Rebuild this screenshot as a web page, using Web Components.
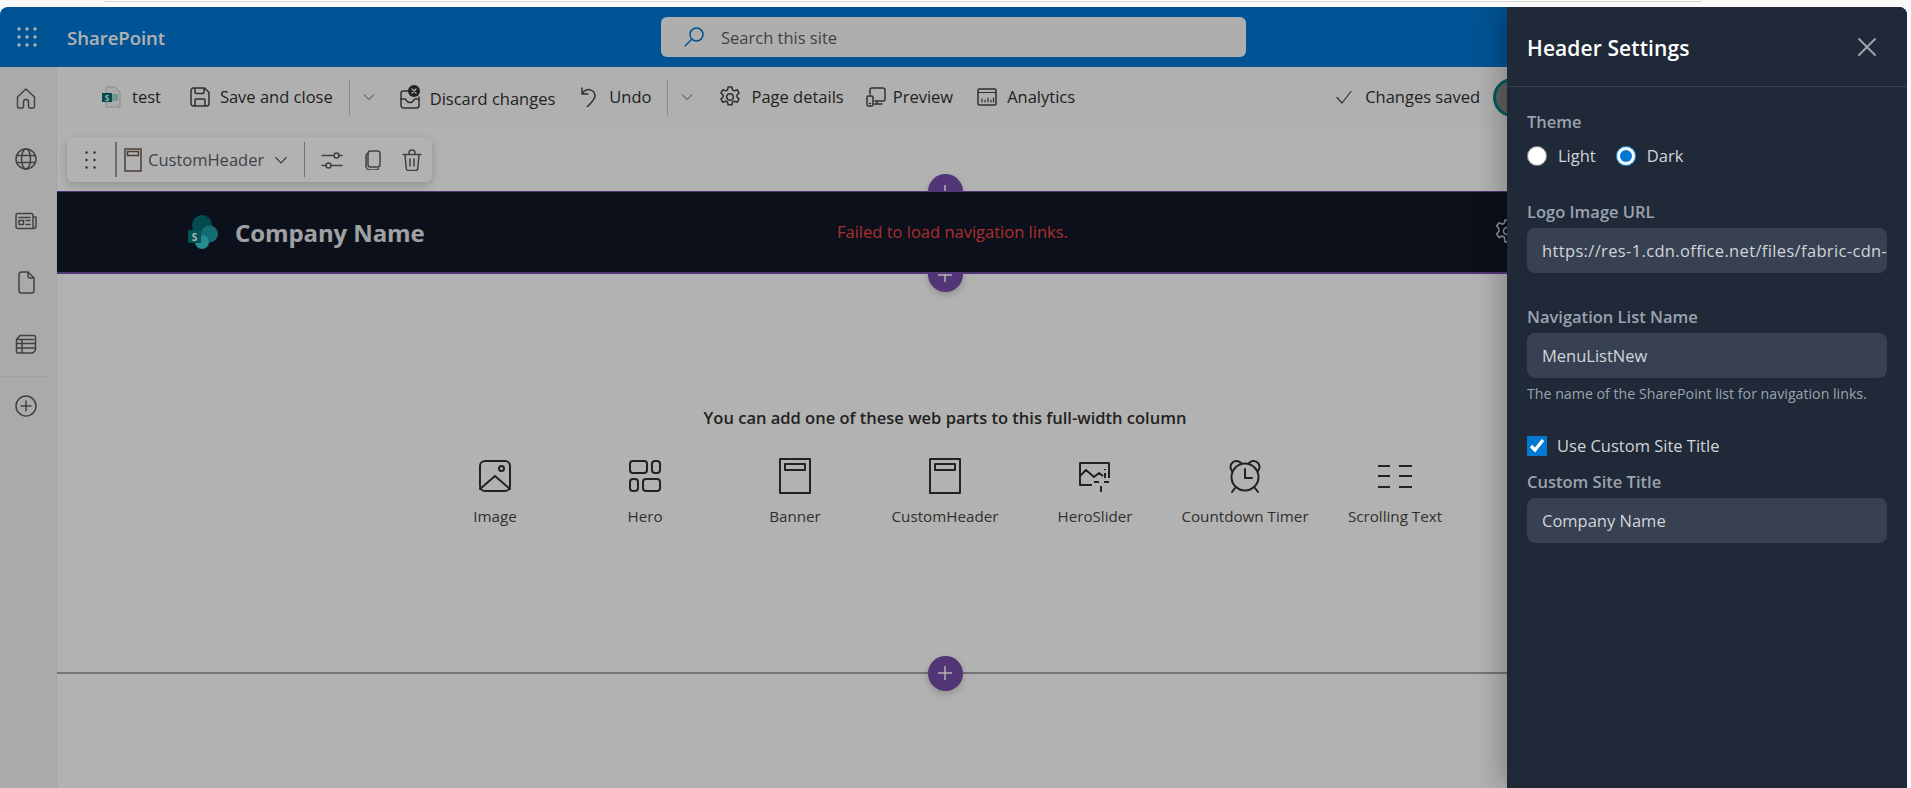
<!DOCTYPE html>
<html lang="en">
<head>
<meta charset="utf-8">
<title>SharePoint - Header Settings</title>
<style>
  html, body { margin: 0; height: 100%; background: #f9f9f9; overflow: hidden; }
  body { font-family: "Open Sans", "Noto Sans", sans-serif; }
</style>
</head>
<body>
<sp-app></sp-app>

<script>
// small helper, every component uses the same open shadow root setup
function shadow(el, html) {
    el.attachShadow({ mode: 'open' });
    el.shadowRoot.innerHTML = html;
}

const svg = (size, body, extra = '') =>
    `<svg width="${size}" height="${size}" viewBox="0 0 ${size} ${size}" fill="none" stroke="currentColor" stroke-width="1.5" stroke-linecap="round" stroke-linejoin="round" ${extra}>${body}</svg>`;

// same as svg() but goes into a component's icon slot
const slotted = (size, body) => svg(size, body, 'slot="icon"');

const chevron = (w, c) =>
    `<svg width="${w}" height="${w}" viewBox="0 0 12 12" fill="none" stroke="${c}" stroke-width="1" stroke-linecap="round" stroke-linejoin="round"><path d="M1.5 4l4.5 4.5L10.5 4"/></svg>`;

class SpSuiteBar extends HTMLElement {
    constructor() {
        super();
        const dots = [];
        for (let r = 0; r < 3; r++) for (let c = 0; c < 3; c++) {
            dots.push(`<circle cx="${2 + c * 8}" cy="${2 + r * 8}" r="1.7"/>`);
        }
        shadow(this, `
            <style>
                :host { display: flex; align-items: center; height: 60px; background: #0078d4; color: #fff; flex: none; }
                .waffle { margin-left: 17px; width: 20px; height: 20px; fill: #fff; flex: none; }
                .brand { margin-left: 30px; width: 100px; font-size: 18.5px; font-weight: 600; flex: none; }
                .search { margin-left: 494px; width: 585px; height: 40px; margin-top: -1px; flex: none; background: #fafafa; border-radius: 6px;
                          display: flex; align-items: center; color: #605e5c; font-size: 16.5px; box-sizing: border-box; padding-left: 22px; }
                .search svg { color: #0078d4; margin-right: 16px; }
                .search span { margin-top: 2px; }
            </style>
            <svg class="waffle" viewBox="0 0 20 20">${dots.join('')}</svg>
            <div class="brand">SharePoint</div>
            <div class="search">
                ${svg(22, '<circle cx="13.5" cy="8.5" r="6.5"/><path d="M8.5 13.5L2 20"/>')}
                <span>Search this site</span>
            </div>
        `);
    }
}

class SpRail extends HTMLElement {
    constructor() {
        super();
        shadow(this, `
            <style>
                :host { display: block; width: 57px; flex: none; background: #f4f4f4; color: #605e5c; box-sizing: border-box; border-right: 1px solid #eee; }
                .i { height: 61.5px; display: flex; align-items: center; justify-content: center; padding-right: 5px; }
                hr { border: 0; height: 1px; background: #e6e6e6; margin: 1px 6px -1px 2px; }
            </style>
            <div class="i">${svg(24, '<path d="M3.5 20.5V11L12 3l8.5 8v9.5A1.5 1.5 0 0 1 19 22h-3a1.5 1.5 0 0 1-1.500-1.500V16a2.500 2.500 0 0 0-5 0v4.500A1.500 1.500 0 0 1 8 22H5a1.500 1.500 0 0 1-1.500-1.500z"/>')}</div>
            <div class="i">${svg(24, '<circle cx="12" cy="12" r="10"/><ellipse cx="12" cy="12" rx="4.500" ry="10"/><path d="M3 8.500h18M3 15.500h18"/>')}</div>
            <div class="i">${svg(24, '<path d="M19 18.500V6.500a2 2 0 0 0-2-2H4a2 2 0 0 0-2 2v11a2 2 0 0 0 2 2h16a2.500 2.500 0 0 0 2-2.500V8h-3"/><rect x="5" y="11.500" width="4.500" height="4"/><path d="M5 8.500h11M12 11.500h4M12 15.500h4"/>')}</div>
            <div class="i">${svg(24, '<path d="M5 4.500A2.500 2.500 0 0 1 7.500 2H14l6 6v12.500a2.500 2.500 0 0 1-2.500 2.500h-10A2.500 2.500 0 0 1 5 20.500zM14 2v4a2 2 0 0 0 2 2h4"/>')}</div>
            <div class="i">${svg(24, '<path d="M2.500 7.500L6 3.500h14A1.500 1.500 0 0 1 21.500 5v13L19 21H4a1.500 1.500 0 0 1-1.500-1.500zM2.500 7.500h17M2.500 11.500h19M2.500 16h19M8 7.500V21"/>')}</div>
            <hr>
            <div class="i">${svg(24, '<circle cx="12" cy="12" r="10"/><path d="M12 7v10M7 12h10"/>')}</div>
        `);
    }
}

// one command in the page bar, icon goes into the slot
class SpCommand extends HTMLElement {
    constructor() {
        super();
        shadow(this, `
            <style>
                :host { display: flex; align-items: center; flex: none; font-size: 16.5px; color: #323130; }
                .ic { display: flex; color: #484644; margin-right: var(--gap, 10px); }
                .tx { margin-top: -2px; }
            </style>
            <span class="ic"><slot name="icon"></slot></span>
            <span class="tx"><slot></slot></span>
        `);
    }
}

class SpSplit extends HTMLElement {
    constructor() {
        super();
        shadow(this, `
            <style>
                :host { display: flex; align-items: center; flex: none; height: 35px; border-left: 1px solid #c8c6c4; padding-left: 13px; }
            </style>
            ${chevron(12, '#605e5c')}
        `);
    }
}

class SpCommandBar extends HTMLElement {
    constructor() {
        super();
        shadow(this, `
            <style>
                :host { display: flex; align-items: center; height: 60px; flex: none; padding: 0 375px 0 45px; background: #fcfcfc; }
                .end { margin-left: auto; }
                .avatar { width: 39px; height: 39px; box-sizing: border-box; border: 3px solid #038387; border-radius: 50%; background: #8a8a8a; margin-left: 13px; flex: none; }
                ::slotted(*) { flex: none; }
            </style>
            <slot></slot>
            <sp-command class="end" style="--gap:13px">${slotted(16, '<path d="M1 8.500l5 5.500L15 2.500" stroke-width="1.200"/>')}Changes saved</sp-command>
            <div class="avatar"></div>
        `);
    }
}

class SpFloatToolbar extends HTMLElement {
    constructor() {
        super();
        const dots = [];
        for (let r = 0; r < 3; r++) for (let c = 0; c < 2; c++) {
            dots.push(`<circle cx="${1.5 + c * 8}" cy="${1.5 + r * 7.5}" r="1.2"/>`);
        }
        shadow(this, `
            <style>
                :host { position: absolute; left: 10px; top: 10px; width: 365px; height: 45px; z-index: 3; background: #fff; border-radius: 6px;
                        box-shadow: 0 3px 10px rgba(0,0,0,.2); display: flex; align-items: center; color: #605e5c; box-sizing: border-box; padding-left: 18px; }
                .dots { fill: #484644; flex: none; }
                .sep { width: 2px; height: 35px; background: #a19f9d; margin-left: 19px; flex: none; }
                .sep.thin { width: 1px; margin-left: 16px; }
                .name { font-size: 16.5px; color: #5a5f6a; margin-left: 6px; width: 116px; flex: none; white-space: nowrap; }
                svg { flex: none; }
                .chev { margin-left: 10px; display: flex; }
                .b { margin-left: 7px; color: #6d5a4f; }
                .t { display: flex; }
            </style>
            <svg class="dots" width="11" height="18" viewBox="0 0 11 18">${dots.join('')}</svg>
            <div class="sep"></div>
            <svg class="b" width="18" height="24" viewBox="0 0 18 24" fill="none" stroke="currentColor" stroke-width="1.5"><rect x="1" y="1" width="16" height="22"/><rect x="3.500" y="3.500" width="11" height="4"/></svg>
            <div class="name">CustomHeader</div>
            <span class="chev">${chevron(14, '#484644')}</span>
            <div class="sep thin"></div>
            <span class="t" style="margin-left:16px">${svg(22, '<path d="M1 6.500h12M18 6.500h3M1 16.500h4M10 16.500h11"/><circle cx="15.500" cy="6.500" r="2.500"/><circle cx="7.500" cy="16.500" r="2.500"/>', 'stroke-width="1.200"')}</span>
            <span class="t" style="margin-left:20px">${svg(20, '<rect x="5" y="1" width="12" height="16" rx="2.500"/><path d="M5 3.500a2.500 2.500 0 0 0-2 2.500v10a4 4 0 0 0 4 4h6a2.500 2.500 0 0 0 2.300-1.500"/>')}</span>
            <span class="t" style="margin-left:18px">${svg(22, '<path d="M2 5.500h18M8 5.500V4a2.500 2.500 0 0 1 6 0v1.500M4 5.500l1.200 13.500a2.500 2.500 0 0 0 2.500 2.500h6.600a2.500 2.500 0 0 0 2.500-2.500L18 5.500M9 10v7M13 10v7"/>')}</span>
        `);
    }
}

class SpAddButton extends HTMLElement {
    constructor() {
        super();
        shadow(this, `
            <style>
                :host { position: absolute; left: 870.500px; width: 35px; height: 35px; border-radius: 50%; background: #744da9;
                        display: flex; align-items: center; justify-content: center; box-shadow: 0 3px 7px rgba(0,0,0,.2); z-index: 1; }
                svg { color: #fff; }
            </style>
            ${svg(16, '<path d="M8 1v14M1 8h14" stroke-linecap="butt"/>')}
        `);
    }
}

class SpDarkHeader extends HTMLElement {
    constructor() {
        super();
        shadow(this, `
            <style>
                :host { display: grid; grid-template-columns: 131px 649px 659px 1fr; align-items: center; height: 83px; box-sizing: border-box;
                        background: #111827; border-top: 1px solid #744da9; border-bottom: 2px solid #744da9; position: relative; z-index: 2; }
                .brand { grid-column: 2; display: flex; align-items: center; color: #e5e7eb; font-size: 24px; font-weight: 700; letter-spacing: -.1px; }
                .brand svg { margin-right: 17px; flex: none; }
                .brand span { margin-top: 1px; }
                .err { color: #ef4444; font-size: 16.5px; margin-top: -1px; }
                .gear { color: #d1d5db; display: flex; margin: -2px 0 0 -2px; }
            </style>
            <div class="brand">
                <svg width="30" height="34" viewBox="0 0 30 34">
                    <circle cx="14" cy="10" r="10" fill="#036c70"/>
                    <circle cx="21.500" cy="19" r="8.500" fill="#1a9ba1"/>
                    <circle cx="14" cy="27" r="7" fill="#37c6d0"/>
                    <rect x="0" y="15" width="13" height="13" rx="1.500" fill="#03787c"/>
                    <text x="6.500" y="25.500" text-anchor="middle" font-size="10" font-weight="700" fill="#fff" font-family="Open Sans, sans-serif">S</text>
                </svg>
                <span>Company Name</span>
            </div>
            <div class="err">Failed to load navigation links.</div>
            <div class="gear">${svg(26, '<circle cx="13" cy="13" r="3.500"/><path d="M11 2h4l.7 3.200 2.200 1 3-1.500 2.500 3.300-2.300 2.500v3l2.300 2.500L21 19.500l-3-1.500-2.200 1L15 24h-4l-.7-5-2.200-1-3 1.500-2.500-3.500 2.300-2.500v-3L2.600 8 5.100 4.700l3 1.500 2.200-1z"/>')}</div>
        `);
    }
}

class SpWebpart extends HTMLElement {
    constructor() {
        super();
        shadow(this, `
            <style>
                :host { display: flex; flex-direction: column; align-items: center; width: 150px; font-size: 15.2px; color: #484644; }
                .ic { height: 36px; display: flex; color: #323130; }
                .lb { margin-top: 12px; line-height: 20px; white-space: nowrap; }
            </style>
            <span class="ic"><slot name="icon"></slot></span>
            <span class="lb"><slot></slot></span>
        `);
    }
}

class SpPicker extends HTMLElement {
    constructor() {
        super();
        shadow(this, `
            <style>
                :host { display: block; padding: 132px 74px 0 0; height: 399px; box-sizing: border-box; position: relative; }
                h3 { margin: 0 0 28px; font-size: 16.5px; font-weight: 600; color: #323130; text-align: center; line-height: 24px; }
                .grid { display: grid; grid-template-columns: repeat(7, 150px); justify-content: center; }
                .line { position: absolute; left: 0; right: 0; top: 398px; height: 2px; background: #a6a6a6; }
                sp-add-button { top: 381.500px; }
                sp-add-button.top { top: -17px; }
            </style>
            <sp-add-button class="top"></sp-add-button>
            <h3>You can add one of these web parts to this full-width column</h3>
            <div class="grid"><slot></slot></div>
            <div class="line"></div>
            <sp-add-button></sp-add-button>
        `);
    }
}

class SpCanvas extends HTMLElement {
    constructor() {
        super();
        shadow(this, `
            <style>
                :host { display: block; position: relative; flex: 1; background: #fff; border-top-left-radius: 10px; }
                .pad { height: 64px; }
            </style>
            <div class="pad"></div>
            <sp-add-button style="top:47px"></sp-add-button>
            <sp-float-toolbar></sp-float-toolbar>
            <sp-dark-header></sp-dark-header>
            <slot></slot>
        `);
    }
}

class SettingsField extends HTMLElement {
    constructor() {
        super();
        shadow(this, `
            <style>
                :host { display: block; }
                label { display: block; font-size: 16.5px; line-height: 24px; font-weight: 600; color: #9ca3af; margin-bottom: 4px; }
                .box { height: 45px; background: #374151; border-radius: 8px; color: #d1d5db; font-size: 16.5px; line-height: 45px; box-sizing: border-box;
                       padding: 0 15px; overflow: hidden; white-space: nowrap; letter-spacing: var(--box-ls, 0); }
                .hint { font-size: 14.2px; color: #9ca3af; line-height: 20px; margin-top: 6px; }
            </style>
            <label>${this.getAttribute('label')}</label>
            <div class="box" role="textbox">${this.getAttribute('value')}</div>
            ${this.hasAttribute('hint') ? `<div class="hint">${this.getAttribute('hint')}</div>` : ''}
        `);
    }
}

class HeaderSettings extends HTMLElement {
    constructor() {
        super();
        shadow(this, `
            <style>
                :host { position: absolute; top: 0; right: 0; bottom: 0; width: 400px; z-index: 6; background: #1f2937; color: #d1d5db;
                        box-shadow: -8px 0 24px rgba(0,0,0,.22); display: block; }
                header { height: 80px; box-sizing: border-box; border-bottom: 1px solid #374151; display: flex; align-items: center;
                         justify-content: space-between; padding: 0 30px 0 20px; }
                h2 { margin: 0 0 -2px; font-size: 21px; font-weight: 600; color: #fff; letter-spacing: .1px; }
                .x { display: flex; color: #9ca3af; }
                .body { padding: 0 20px; }
                .theme-l { font-size: 16.5px; font-weight: 600; line-height: 24px; color: #9ca3af; margin-top: 23px; }
                .radios { display: flex; align-items: center; height: 24px; margin-top: 10px; font-size: 16.5px; }
                input { margin: 0; accent-color: #0078d4; flex: none; }
                input[type=radio] { width: 20px; height: 20px; }
                .radios span { margin: -2px 20px 0 11px; }
                .check { display: flex; align-items: center; height: 24px; font-size: 16.5px; margin-top: 30px; }
                .check input { width: 20px; height: 20px; margin-right: 10px; }
                .check span { margin-top: -2px; }
                .f1, .f2 { margin-top: 32px; }
                .f1 { --box-ls: .35px; }
                .f3 { margin-top: 12px; }
            </style>
            <header>
                <h2>Header Settings</h2>
                <span class="x">${svg(20, '<path d="M2 2l16 16M18 2L2 18" stroke-width="2"/>')}</span>
            </header>
            <div class="body">
                <div class="theme-l">Theme</div>
                <div class="radios">
                    <input type="radio" name="theme"><span>Light</span>
                    <input type="radio" name="theme" checked><span>Dark</span>
                </div>
                <settings-field class="f1" label="Logo Image URL" value="https://res-1.cdn.office.net/files/fabric-cdn-"></settings-field>
                <settings-field class="f2" label="Navigation List Name" value="MenuListNew" hint="The name of the SharePoint list for navigation links."></settings-field>
                <div class="check"><input type="checkbox" checked><span>Use Custom Site Title</span></div>
                <settings-field class="f3" label="Custom Site Title" value="Company Name"></settings-field>
            </div>
        `);
    }
}

class SpApp extends HTMLElement {
    constructor() {
        super();
        shadow(this, `
            <style>
                :host { display: flex; flex-direction: column; height: 788px; background: #f9f9f9; }
                .strip { height: 7px; flex: none; padding: 0 209px 0 104px; }
                .strip div { height: 1px; background: #fff; border: 1px solid #d4d4d4; border-top: 0; border-radius: 0 0 6px 6px; }
                .frame { position: relative; flex: 1; margin-right: 4px; border-radius: 8px 8px 0 0; overflow: hidden; display: flex; flex-direction: column; background: #fff; }
                .row { flex: 1; display: flex; min-height: 0; }
                .main { flex: 1; display: flex; flex-direction: column; min-width: 0; background: #fcfcfc; }
                .scrim { position: absolute; inset: 0; background: rgba(0,0,0,.3); z-index: 5; }
            </style>
            <div class="strip"><div></div></div>
            <div class="frame">
                <sp-suite-bar></sp-suite-bar>
                <div class="row">
                    <sp-rail></sp-rail>
                    <div class="main">
                        <sp-command-bar>
                            <sp-command style="--gap:11px">
                                <svg slot="icon" width="19" height="22" viewBox="0 0 19 22"><path d="M4 1h9l5 5v15H4z" fill="#f4f4f4" stroke="#c8c6c4"/><rect x="9" y="8" width="7" height="7" fill="#9fd8d4"/><rect x="0" y="7" width="10" height="9" fill="#036c70"/><text x="5" y="14.500" text-anchor="middle" font-size="8" font-weight="700" fill="#fff" font-family="Open Sans, sans-serif">S</text></svg>
                                test
                            </sp-command>
                            <sp-command style="margin-left:29px">
                                ${slotted(20, '<path d="M1 3.500A2.500 2.500 0 0 1 3.500 1h11L19 5.500v11a2.500 2.500 0 0 1-2.500 2.500h-13A2.500 2.500 0 0 1 1 16.500zM5 1v4.500a1 1 0 0 0 1 1h7a1 1 0 0 0 1-1V1M5 19v-6a1 1 0 0 1 1-1h8a1 1 0 0 1 1 1v6"/>')}
                                Save and close
                            </sp-command>
                            <sp-split style="margin-left:16px"></sp-split>
                            <sp-command style="margin-left:25px;margin-top:4px">
                                <svg slot="icon" width="20" height="24" viewBox="0 0 20 24" fill="none" stroke="currentColor" stroke-width="1.500" stroke-linecap="round" stroke-linejoin="round" style="margin-top:-4px"><path d="M8 6H3.500A2.500 2.500 0 0 0 1 8.500v12A2.500 2.500 0 0 0 3.500 23h13a2.500 2.500 0 0 0 2.500-2.500V12"/><path d="M1 14h4c1 0 1.500 3.500 5 3.500s4-3.500 5-3.500h4"/><circle cx="14" cy="6" r="6" fill="#323130" stroke="none"/><path d="M12 4l4 4M16 4l-4 4" stroke="#fff" stroke-width="1.200"/></svg>
                                Discard changes
                            </sp-command>
                            <sp-command style="margin-left:24px;--gap:10px">
                                ${slotted(20, '<path d="M3 1v6h6M3 7l2-2.500A6.500 6.500 0 0 1 16 9c0 3.500-4 7-8 11"/>')}
                                Undo
                            </sp-command>
                            <sp-split style="margin-left:15px"></sp-split>
                            <sp-command style="margin-left:26px;--gap:11px">
                                <svg slot="icon" width="22" height="22" viewBox="0 0 20 20" fill="none" stroke="currentColor" stroke-width="1.400" stroke-linecap="round" stroke-linejoin="round"><circle cx="10" cy="10" r="3"/><path d="M8.300 1h3.400l.6 2.600 1.700.8 2.500-1 1.700 2.900-1.900 1.900v1.800l1.900 1.900-1.700 2.900-2.500-1-1.700.8-.6 2.400H8.300l-.6-2.400-1.700-.8-2.500 1-1.700-2.900 1.900-1.900V8.200L1.800 6.300l1.700-2.900 2.500 1 1.700-.8z"/></svg>
                                Page details
                            </sp-command>
                            <sp-command style="margin-left:22px;--gap:7px">
                                ${slotted(20, '<path d="M4 7V3a2 2 0 0 1 2-2h11a2 2 0 0 1 2 2v9a2 2 0 0 1-2 2H9M11 14v3M8 17h8"/><rect x="1" y="9" width="6" height="10" rx="1.500"/><path d="M3.500 16.500h1"/>')}
                                Preview
                            </sp-command>
                            <sp-command style="margin-left:24px">
                                ${slotted(20, '<rect x="1" y="2" width="18" height="16" rx="1"/><path d="M1 5.500h18M5 15v-3M8 15v-2M11 15v-4M14 15v-2M16.500 15v-4" stroke-width="1.200"/>')}
                                Analytics
                            </sp-command>
                        </sp-command-bar>
                        <sp-canvas>
                            <sp-picker>
                                <sp-webpart>${slotted(36, '<rect x="3" y="3" width="30" height="30" rx="5" stroke-width="2"/><path d="M3 31l15-13 15 13" stroke-width="2"/><circle cx="24.500" cy="10.500" r="2.500" stroke-width="2"/>')}Image</sp-webpart>
                                <sp-webpart>${slotted(36, '<rect x="3" y="3" width="17" height="12" rx="3" stroke-width="2"/><rect x="25" y="3" width="8" height="12" rx="3" stroke-width="2"/><rect x="3" y="21" width="8" height="12" rx="3" stroke-width="2"/><rect x="16" y="21" width="17" height="12" rx="3" stroke-width="2"/>')}Hero</sp-webpart>
                                <sp-webpart>${slotted(36, '<rect x="3" y="1" width="30" height="34" stroke-width="2"/><rect x="8" y="6" width="20" height="6" stroke-width="2"/>')}Banner</sp-webpart>
                                <sp-webpart>${slotted(36, '<rect x="3" y="1" width="30" height="34" stroke-width="2"/><rect x="8" y="6" width="20" height="6" stroke-width="2"/>')}CustomHeader</sp-webpart>
                                <sp-webpart>${slotted(36, '<path d="M15 27H3V5h29v15M3 18l6-6 8 7 5-4 4 3M28 11v1M28 15v5M17 24h5M27 24h5M24 28v6" stroke-width="2" stroke-linecap="butt"/>')}HeroSlider</sp-webpart>
                                <sp-webpart>${slotted(36, '<circle cx="18" cy="19" r="13.500" stroke-width="2"/><path d="M18 11v9h7M5 13a6 6 0 0 1 9-8M31 13a6 6 0 0 0-9-8M8 30l-3 4M28 30l3 4" stroke-width="2"/>')}Countdown Timer</sp-webpart>
                                <sp-webpart>${slotted(36, '<path d="M1 8h12M22 8h13M1 18h12M22 18h13M1 29h12M22 29h13" stroke-width="2" stroke-linecap="butt"/>')}Scrolling Text</sp-webpart>
                            </sp-picker>
                        </sp-canvas>
                    </div>
                </div>
                <div class="scrim"></div>
                <header-settings></header-settings>
            </div>
        `);
    }
}

customElements.define('sp-suite-bar', SpSuiteBar);
customElements.define('sp-rail', SpRail);
customElements.define('sp-command', SpCommand);
customElements.define('sp-split', SpSplit);
customElements.define('sp-command-bar', SpCommandBar);
customElements.define('sp-float-toolbar', SpFloatToolbar);
customElements.define('sp-add-button', SpAddButton);
customElements.define('sp-dark-header', SpDarkHeader);
customElements.define('sp-webpart', SpWebpart);
customElements.define('sp-picker', SpPicker);
customElements.define('sp-canvas', SpCanvas);
customElements.define('settings-field', SettingsField);
customElements.define('header-settings', HeaderSettings);
customElements.define('sp-app', SpApp);
</script>
</body>
</html>
